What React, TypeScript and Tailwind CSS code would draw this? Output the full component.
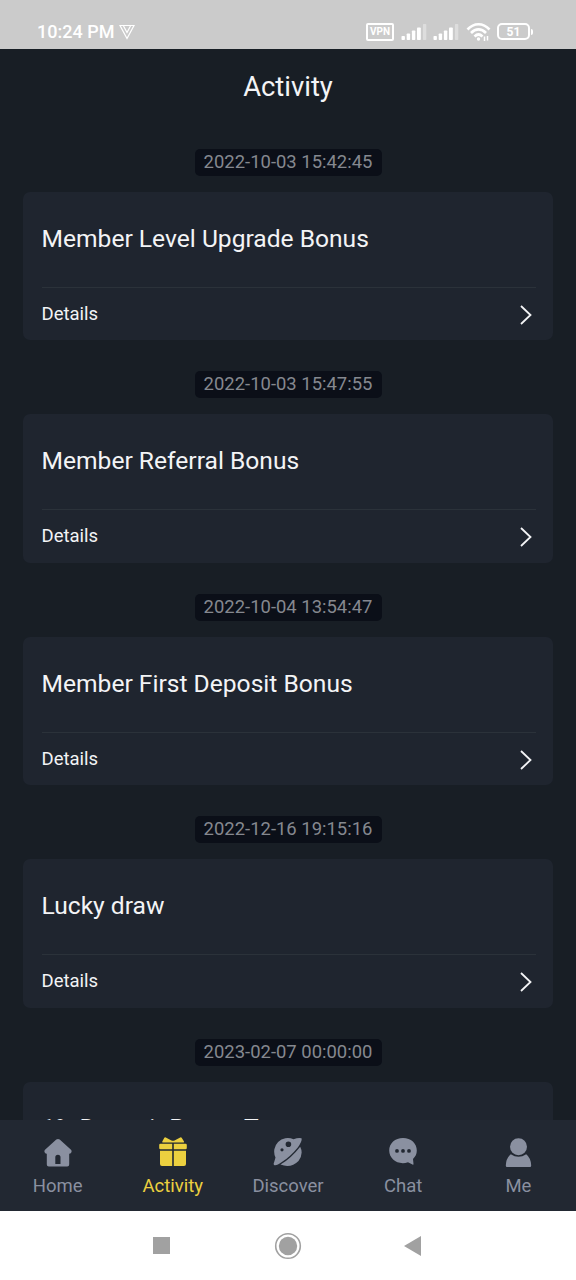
import type { ReactNode } from "react";

interface ActivityItem {
  date: string;
  title: string;
  hideDetails?: boolean;
}

const activities: ActivityItem[] = [
  { date: "2022-10-03 15:42:45", title: "Member Level Upgrade Bonus" },
  { date: "2022-10-03 15:47:55", title: "Member Referral Bonus" },
  { date: "2022-10-04 13:54:47", title: "Member First Deposit Bonus" },
  { date: "2022-12-16 19:15:16", title: "Lucky draw" },
  { date: "2023-02-07 00:00:00", title: "1% Deposit Bonus T", hideDetails: true },
];

function SignalBars() {
  return (
    <svg width="26" height="18" viewBox="0 0 26 18" fill="currentColor">
      <rect x="0.500" y="13" width="3.400" height="4" rx="0.800" />
      <rect x="5.700" y="10.500" width="3.400" height="6.500" rx="0.800" />
      <rect x="10.900" y="7.500" width="3.400" height="9.500" rx="0.800" />
      <rect x="16" y="4.500" width="3.800" height="12.500" rx="0.800" />
      <rect x="21.900" y="1" width="3.400" height="16" rx="0.800" opacity="0.350" />
    </svg>
  );
}

function StatusBar() {
  return (
    <div className="flex h-[48.600px] shrink-0 items-center bg-[#cbcbcb] pt-[15px] pl-[37px] text-white">
      <span className="w-[82px] whitespace-nowrap text-[18px] leading-5 font-medium">10:24 PM</span>
      <svg width="16" height="16" viewBox="0 0 16 16" fill="none" stroke="currentColor" strokeWidth="1.200">
        <path d="M1 1.500H15L8 14.500Z" />
        <path d="M4.500 2L8 8.500L11.500 2" />
      </svg>
      <div className="ml-[231px] flex h-[18px] w-7 shrink-0 items-center justify-center rounded-[2px] border-2 border-white text-[10px] leading-none font-bold">
        VPN
      </div>
      <div className="ml-[7px] flex gap-[6px]">
        <SignalBars />
        <SignalBars />
      </div>
      <svg className="ml-[7px]" width="26" height="20" viewBox="0 0 26 20" fill="none" stroke="currentColor" strokeWidth="2.600">
        <path d="M1.500 7.500C8 0.500 17 0.500 23.500 7.500" />
        <path d="M5 11C9.500 6.200 15.500 6.200 20 11" />
        <path d="M8.500 14.500C11 12 14 12 16.500 14.500" />
        <circle cx="12.500" cy="17" r="1.700" fill="currentColor" stroke="none" />
        <path d="M18.500 14.500V19M21.500 14V18.500" strokeWidth="1.500" />
      </svg>
      <div className="ml-[5px] flex h-[17px] w-[33px] items-center justify-center rounded-[5px] border-2 border-white text-[12px] leading-none font-bold">
        51
      </div>
      <div className="ml-px h-[6px] w-[2px] rounded-r bg-white" />
    </div>
  );
}

function ActivityCard({ date, title, hideDetails }: ActivityItem) {
  return (
    <div className="h-[222.500px] shrink-0">
      <div className="mx-auto flex h-[27px] w-[187px] items-center justify-center rounded-[5px] bg-[#0b0f18] pt-px text-[18.450px] text-[#85888f]">
        {date}
      </div>
      <div className="mx-[23px] mt-[16px] h-[148.500px] rounded-[7px] bg-[#1f252f] pr-[17px] pl-[18.500px]">
        <div className="flex h-[96px] items-center border-b border-[#2b323a] text-[24.600px] text-[#f3f4f6]">
          <span className={hideDetails ? "-mt-[2px] whitespace-nowrap" : "whitespace-nowrap"}>{title}</span>
        </div>
        {!hideDetails && (
          <div className="flex h-[53px] items-center justify-between pr-[4px] text-[18.500px] text-[#f3f4f6]">
            <span className="mt-px">Details</span>
            <svg className="mt-px" width="12" height="20" viewBox="0 0 12 20" fill="none" stroke="currentColor" strokeWidth="1.800">
              <path d="M1 1L10.500 10L1 19" />
            </svg>
          </div>
        )}
      </div>
    </div>
  );
}

function HomeIcon() {
  return (
    <svg width="30" height="30" viewBox="0 0 30 30" fill="currentColor">
      <path
        fillRule="evenodd"
        d="M13.300 2.600Q15 1.200 16.700 2.600L28 12.800Q29.200 14 28.300 15.500Q27.500 16.800 26.200 16.800V27.500Q26.200 29.500 24.200 29.500H5.800Q3.800 29.500 3.800 27.500V16.800Q2.500 16.800 1.700 15.500Q0.800 14 2 12.800ZM12.300 27H17.500V20.300A2.600 2.600 0 0 0 12.300 20.300Z"
      />
    </svg>
  );
}

function GiftIcon() {
  return (
    <svg width="30" height="30" viewBox="0 0 30 30" fill="currentColor">
      <path d="M4.300 4.500L6.300 0.700Q6.800 0 7.800 0.400L13 3.200Q15 4.500 17 3.200L22.200 0.400Q23.200 0 23.700 0.700L26 4.500Q26.500 5.600 25.500 5.600H4.800Q3.800 5.600 4.300 4.500Z" />
      <path d="M2.500 6.800H14.200V12.300H2.500Q1.200 12.300 1.200 11V8.100Q1.200 6.800 2.500 6.800ZM15.800 6.800H27.500Q28.800 6.800 28.800 8.100V11Q28.800 12.300 27.500 12.300H15.800Z" />
      <path d="M2 13.700H14.200V29H4Q2 29 2 27ZM15.800 13.700H28V27Q28 29 26 29H15.800Z" />
    </svg>
  );
}

function PlanetIcon() {
  return (
    <svg width="30" height="30" viewBox="0 0 30 30" fill="currentColor">
      <path
        fillRule="evenodd"
        d="M1.500 28.300Q0 27.500 1.200 25L2.500 20.500A13.600 13.600 0 0 1 20.500 2.300Q25.500 0.300 28.500 1.200Q29.500 4 25 10.200Q17 20 8.500 25.300Q4 28.800 1.500 28.300ZM15.400 4.500A2.800 2.800 0 1 0 15.400 10.100A2.800 2.800 0 1 0 15.400 4.500ZM9 11.200A1.600 1.600 0 1 0 9 14.400A1.600 1.600 0 1 0 9 11.200Z"
      />
      <path d="M7.500 27.600Q17.500 22 27.200 9.800Q30.800 17 25.500 24Q18 31.500 7.500 27.600Z" />
    </svg>
  );
}

function ChatIcon() {
  return (
    <svg width="30" height="30" viewBox="0 0 30 30" fill="currentColor">
      <path
        fillRule="evenodd"
        d="M15 1C23 1 28.800 6.300 28.800 13.500C28.800 17 27.500 19.500 25 22L25.500 27Q25.500 28 24.500 27.400L20 25.300C10 28.500 1.200 22 1.200 13.500C1.200 6.300 7 1 15 1ZM9 12A1.900 1.900 0 1 0 9 15.800A1.900 1.900 0 1 0 9 12ZM15 12A1.900 1.900 0 1 0 15 15.800A1.900 1.900 0 1 0 15 12ZM21 12A1.900 1.900 0 1 0 21 15.800A1.900 1.900 0 1 0 21 12Z"
      />
    </svg>
  );
}

function PersonIcon() {
  return (
    <svg width="30" height="30" viewBox="0 0 30 30" fill="currentColor">
      <circle cx="15.500" cy="9.700" r="8.500" />
      <path d="M7.800 17.200Q15.500 22.300 23.200 17.200Q28 21 28.200 28.500Q28.200 30 27 30H4Q2.800 30 2.800 28.500Q3 21 7.800 17.200Z" />
    </svg>
  );
}

const tabs: { label: string; icon: ReactNode; active?: boolean }[] = [
  { label: "Home", icon: <HomeIcon /> },
  { label: "Activity", icon: <GiftIcon />, active: true },
  { label: "Discover", icon: <PlanetIcon /> },
  { label: "Chat", icon: <ChatIcon /> },
  { label: "Me", icon: <PersonIcon /> },
];

function TabBar() {
  return (
    <nav className="flex h-[91px] shrink-0 bg-[#222832]">
      {tabs.map((tab) => (
        <div
          key={tab.label}
          className={`flex flex-1 flex-col items-center pt-[17px] ${tab.active ? "text-[#ecd03f]" : "text-[#8a90a0]"}`}
        >
          {tab.icon}
          <span className="mt-[7px] text-[18.500px] leading-6">{tab.label}</span>
        </div>
      ))}
    </nav>
  );
}

export default function App() {
  return (
    <div className="flex h-[1280px] w-[576px] flex-col overflow-hidden bg-[#181e25] font-[Roboto,sans-serif]">
      <StatusBar />
      <h1 className="flex h-[77px] shrink-0 items-center justify-center text-[27.400px] text-[#f3f4f6]">Activity</h1>
      <div className="flex min-h-0 flex-1 flex-col overflow-hidden pt-[23px]">
        {activities.map((item) => (
          <ActivityCard key={item.date} {...item} />
        ))}
      </div>
      <TabBar />
      {/* Android navigation */}
      <div className="flex h-[69px] shrink-0 items-center bg-white pl-[153px] text-[#a1a1a1]">
        <div className="h-[17px] w-[17px] bg-current" />
        <svg className="ml-[104px]" width="28" height="28" viewBox="0 0 28 28">
          <circle cx="14" cy="14" r="12.300" fill="none" stroke="currentColor" strokeWidth="1.600" />
          <circle cx="14" cy="14" r="9.200" fill="currentColor" />
        </svg>
        <svg className="ml-[102px]" width="17" height="20" viewBox="0 0 17 20" fill="currentColor">
          <path d="M0 10L17 0V20Z" />
        </svg>
      </div>
    </div>
  );
}
